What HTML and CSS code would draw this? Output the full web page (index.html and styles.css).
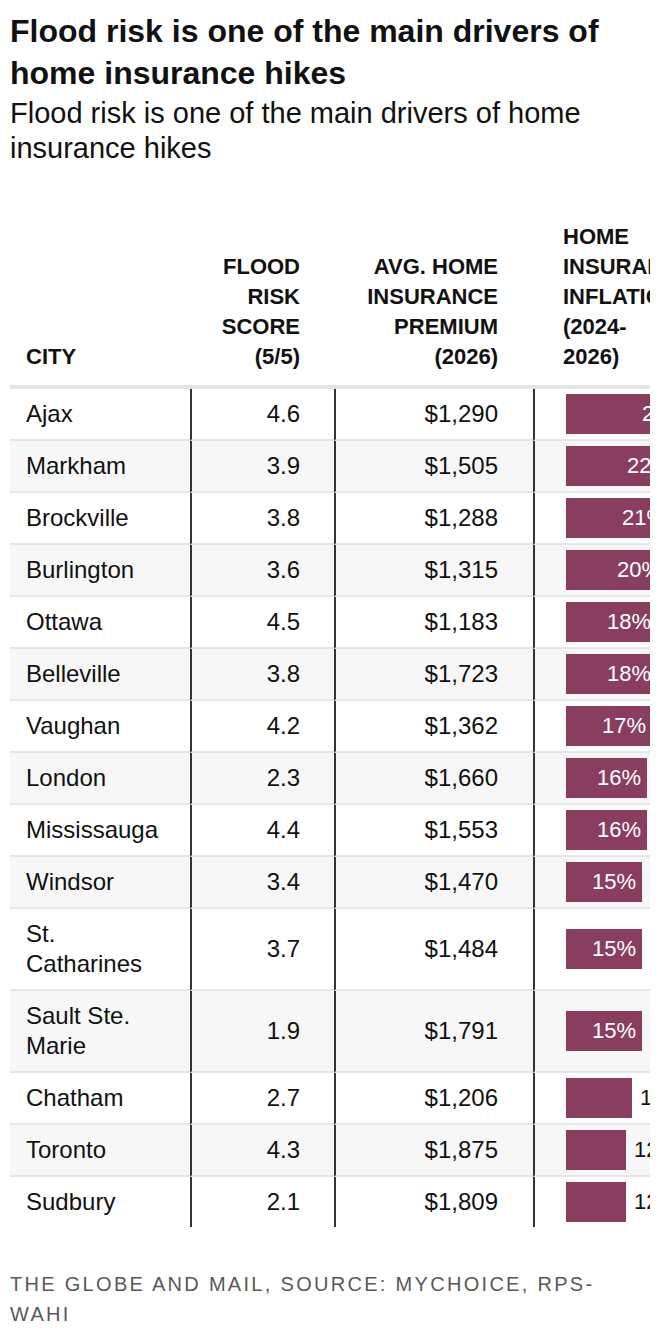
FILE: index.html
```html
<!DOCTYPE html>
<html lang="en">
<head>
<meta charset="utf-8">
<title>Flood risk is one of the main drivers of home insurance hikes</title>
<link rel="stylesheet" href="styles.css">
</head>
<body>
<main class="graphic">
  <h1 class="title">Flood risk is one of the main drivers of home insurance hikes</h1>
  <p class="subtitle">Flood risk is one of the main drivers of home insurance hikes</p>

  <div class="table-wrap">
    <table class="data">
      <colgroup>
        <col class="c-city">
        <col class="c-score">
        <col class="c-premium">
        <col class="c-bar">
      </colgroup>
      <thead>
        <tr>
          <th class="h-city">City</th>
          <th class="h-num h-score">Flood risk score (5/5)</th>
          <th class="h-num h-premium">Avg. home insurance premium (2026)</th>
          <th class="h-bar">Home insurance inflation (2024-<br>2026)</th>
        </tr>
      </thead>
      <tbody>
        <tr><td class="city">Ajax</td><td class="num score">4.6</td><td class="num premium">$1,290</td><td class="bar-cell"><div class="bar-line"><div class="bar" style="width:126px"><span class="bar-label in">25%</span></div></div></td></tr>
        <tr><td class="city">Markham</td><td class="num score">3.9</td><td class="num premium">$1,505</td><td class="bar-cell"><div class="bar-line"><div class="bar" style="width:111px"><span class="bar-label in">22%</span></div></div></td></tr>
        <tr><td class="city">Brockville</td><td class="num score">3.8</td><td class="num premium">$1,288</td><td class="bar-cell"><div class="bar-line"><div class="bar" style="width:106px"><span class="bar-label in">21%</span></div></div></td></tr>
        <tr><td class="city">Burlington</td><td class="num score">3.6</td><td class="num premium">$1,315</td><td class="bar-cell"><div class="bar-line"><div class="bar" style="width:101px"><span class="bar-label in">20%</span></div></div></td></tr>
        <tr><td class="city">Ottawa</td><td class="num score">4.5</td><td class="num premium">$1,183</td><td class="bar-cell"><div class="bar-line"><div class="bar" style="width:91px"><span class="bar-label in">18%</span></div></div></td></tr>
        <tr><td class="city">Belleville</td><td class="num score">3.8</td><td class="num premium">$1,723</td><td class="bar-cell"><div class="bar-line"><div class="bar" style="width:91px"><span class="bar-label in">18%</span></div></div></td></tr>
        <tr><td class="city">Vaughan</td><td class="num score">4.2</td><td class="num premium">$1,362</td><td class="bar-cell"><div class="bar-line"><div class="bar" style="width:86px"><span class="bar-label in">17%</span></div></div></td></tr>
        <tr><td class="city">London</td><td class="num score">2.3</td><td class="num premium">$1,660</td><td class="bar-cell"><div class="bar-line"><div class="bar" style="width:81px"><span class="bar-label in">16%</span></div></div></td></tr>
        <tr><td class="city">Mississauga</td><td class="num score">4.4</td><td class="num premium">$1,553</td><td class="bar-cell"><div class="bar-line"><div class="bar" style="width:81px"><span class="bar-label in">16%</span></div></div></td></tr>
        <tr><td class="city">Windsor</td><td class="num score">3.4</td><td class="num premium">$1,470</td><td class="bar-cell"><div class="bar-line"><div class="bar" style="width:76px"><span class="bar-label in">15%</span></div></div></td></tr>
        <tr><td class="city">St. Catharines</td><td class="num score">3.7</td><td class="num premium">$1,484</td><td class="bar-cell"><div class="bar-line"><div class="bar" style="width:76px"><span class="bar-label in">15%</span></div></div></td></tr>
        <tr><td class="city">Sault Ste. Marie</td><td class="num score">1.9</td><td class="num premium">$1,791</td><td class="bar-cell"><div class="bar-line"><div class="bar" style="width:76px"><span class="bar-label in">15%</span></div></div></td></tr>
        <tr><td class="city">Chatham</td><td class="num score">2.7</td><td class="num premium">$1,206</td><td class="bar-cell"><div class="bar-line"><div class="bar" style="width:66px"></div><span class="bar-label out">13%</span></div></td></tr>
        <tr><td class="city">Toronto</td><td class="num score">4.3</td><td class="num premium">$1,875</td><td class="bar-cell"><div class="bar-line"><div class="bar" style="width:60px"></div><span class="bar-label out">12%</span></div></td></tr>
        <tr><td class="city">Sudbury</td><td class="num score">2.1</td><td class="num premium">$1,809</td><td class="bar-cell"><div class="bar-line"><div class="bar" style="width:60px"></div><span class="bar-label out">12%</span></div></td></tr>
      </tbody>
    </table>
  </div>

  <p class="credit">The Globe and Mail, Source: MyChoice, RPS-WAHI</p>
</main>
</body>
</html>
```

FILE: styles.css
```css
* {
  box-sizing: border-box;
}

html, body {
  margin: 0;
  padding: 0;
  background: #ffffff;
}

body {
  font-family: "Liberation Sans", Arial, sans-serif;
  color: #111111;
}

.graphic {
  padding: 10px 10px 0 10px;
}

.title {
  margin: 0;
  font-size: 32px;
  line-height: 42px;
  font-weight: 700;
  color: #111111;
}

.subtitle {
  margin: 2px 0 0 0;
  font-size: 29px;
  line-height: 35px;
  font-weight: 400;
  color: #111111;
}

.table-wrap {
  margin-top: 56px;
  width: 640px;
  overflow: hidden;
}

.data {
  border-collapse: separate;
  border-spacing: 0;
  table-layout: fixed;
  width: 743px;
}

.c-city { width: 180px; }
.c-score { width: 144px; }
.c-premium { width: 199px; }
.c-bar { width: 220px; }

.data th {
  font-size: 22px;
  line-height: 30px;
  font-weight: 700;
  text-transform: uppercase;
  vertical-align: bottom;
  padding: 0 0 13px 0;
  border-bottom: 4px solid #e4e4e4;
  color: #111111;
}

.h-city {
  text-align: left;
  padding-left: 16px !important;
}

.h-num {
  text-align: right;
}

.h-score {
  padding-left: 16px !important;
  padding-right: 34px !important;
}

.h-premium {
  padding-left: 16px !important;
  padding-right: 35px !important;
}

.h-bar {
  text-align: left;
  padding-left: 30px !important;
  padding-right: 40px !important;
}

.data td {
  font-size: 24px;
  line-height: 30px;
  padding: 10px 16px;
  border-bottom: 2px solid #e6e6e6;
  vertical-align: middle;
  color: #111111;
}

.data tbody tr:nth-child(even) td {
  background: #f7f7f7;
}

.data tbody tr:last-child td {
  border-bottom: 0;
}

.data td.num {
  text-align: right;
  border-left: 2px solid #333333;
}

.data td.score {
  padding-right: 34px;
}

.data td.premium {
  padding-right: 35px;
}

.data td.bar-cell {
  border-left: 2px solid #333333;
  padding: 0 0 0 31px;
}

.bar-line {
  display: flex;
  align-items: center;
  height: 40px;
}

.bar {
  height: 40px;
  flex: none;
  background: #8a3e5f;
  display: flex;
  justify-content: flex-end;
  align-items: center;
}

.bar-label {
  font-size: 22px;
  line-height: 40px;
  white-space: nowrap;
}

.bar-label.in {
  color: #ffffff;
  padding-right: 6px;
}

.bar-label.out {
  color: #111111;
  margin-left: 8px;
}

.credit {
  margin: 42px 0 0 0;
  max-width: 620px;
  font-size: 20px;
  line-height: 30px;
  letter-spacing: 2.3px;
  text-transform: uppercase;
  color: #595959;
}
```
